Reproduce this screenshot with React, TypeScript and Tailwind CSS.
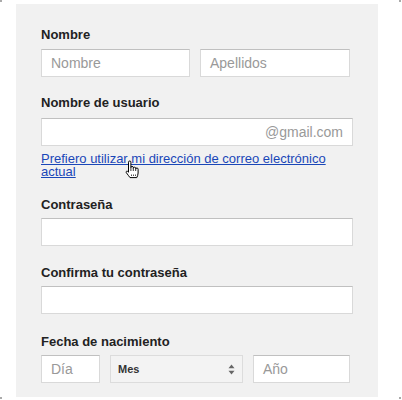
import React from 'react';

const Label: React.FC<{ children: React.ReactNode }> = ({ children }) => (
  <div className="text-[13px] leading-4 font-bold text-[#222]">{children}</div>
);

const Field: React.FC<{ className?: string; children?: React.ReactNode }> = ({ className = '', children }) => (
  <div
    className={`h-[28px] bg-white border border-[#d9d9d9] border-t-[#c0c0c0] flex items-center px-[9px] text-[14px] text-[#999] ${className}`}
  >
    {children}
  </div>
);

const HandCursor = () => (
  <svg width="15" height="19" viewBox="0 0 15 19" className="absolute left-[84px] top-[8px]">
    <path
      d="M3.5 10 V2.2 A1.2 1.2 0 0 1 5.9 2.2 V7.6 A1.2 1.2 0 0 1 8.3 7.6 V8.4 A1.2 1.2 0 0 1 10.7 8.4 V9.2 A1.2 1.2 0 0 1 13.1 9.2 V13 C13.1 15 12.3 16.4 11.8 17.6 H5 C4.2 16.3 2.6 14.6 1.3 12.7 C0.8 11.8 1.4 10.9 2.3 11.2 L3.5 12.2 Z"
      fill="white"
      stroke="black"
      strokeWidth="1"
      strokeLinejoin="round"
    />
    <path d="M5.9 7.6 V11 M8.3 8.4 V11 M10.7 9.2 V11" stroke="black" strokeWidth="0.8" />
    <path d="M6.5 14.5 V16 M8.5 14.5 V16 M10.5 14.5 V16" stroke="black" strokeWidth="0.7" />
  </svg>
);

export default function App() {
  return (
    <div className="relative w-[402px] h-[400px] bg-white font-['Liberation_Sans',Arial,sans-serif] overflow-hidden">
      <div className="absolute left-0 top-0 w-[2px] h-[2px] bg-[#aaa]" />
      <div className="absolute right-[1px] top-0 w-[2px] h-[2px] bg-[#aaa]" />
      <div className="absolute left-0 bottom-[1px] w-[2px] h-[2px] bg-[#aaa]" />
      <div className="absolute right-[1px] bottom-[1px] w-[2px] h-[2px] bg-[#aaa]" />

      <div className="ml-[16px] mt-[4px] w-[362px] h-[393px] bg-[#f1f1f1] pl-[25px] pt-[23px]">
        {/* Nombre */}
        <Label>Nombre</Label>
        <div className="mt-[6px] flex gap-[10px]">
          <Field className="w-[149px]">Nombre</Field>
          <Field className="w-[150px]">Apellidos</Field>
        </div>

        {/* Usuario */}
        <div className="mt-[18px]">
          <Label>Nombre de usuario</Label>
        </div>
        <Field className="mt-[7px] w-[312px] justify-end text-[#777]">@gmail.com</Field>
        <div className="relative mt-[6px] w-[300px] text-[13px] leading-[13px] text-[#1a47b8] underline">
          Prefiero utilizar mi dirección de correo electrónico actual
          <HandCursor />
        </div>

        {/* Contraseña */}
        <div className="mt-[19px]">
          <Label>Contraseña</Label>
        </div>
        <Field className="mt-[5px] w-[312px]" />

        <div className="mt-[19px]">
          <Label>Confirma tu contraseña</Label>
        </div>
        <Field className="mt-[5px] w-[312px]" />

        {/* Fecha */}
        <div className="mt-[20px]">
          <Label>Fecha de nacimiento</Label>
        </div>
        <div className="mt-[5px] flex gap-[10px]">
          <Field className="w-[59px]">Día</Field>
          <div className="h-[28px] w-[133px] bg-[#f3f3f3] border border-[#dcdcdc] flex items-center justify-between pl-[7px] pr-[7px] text-[11px] font-bold text-[#333]">
            <span>Mes</span>
            <svg width="7" height="11" viewBox="0 0 7 11">
              <path d="M3.5 0.5 L6.5 4.2 H0.5 Z" fill="#666" />
              <path d="M3.5 10.5 L6.5 6.8 H0.5 Z" fill="#666" />
            </svg>
          </div>
          <Field className="w-[97px]">Año</Field>
        </div>
      </div>
    </div>
  );
}
